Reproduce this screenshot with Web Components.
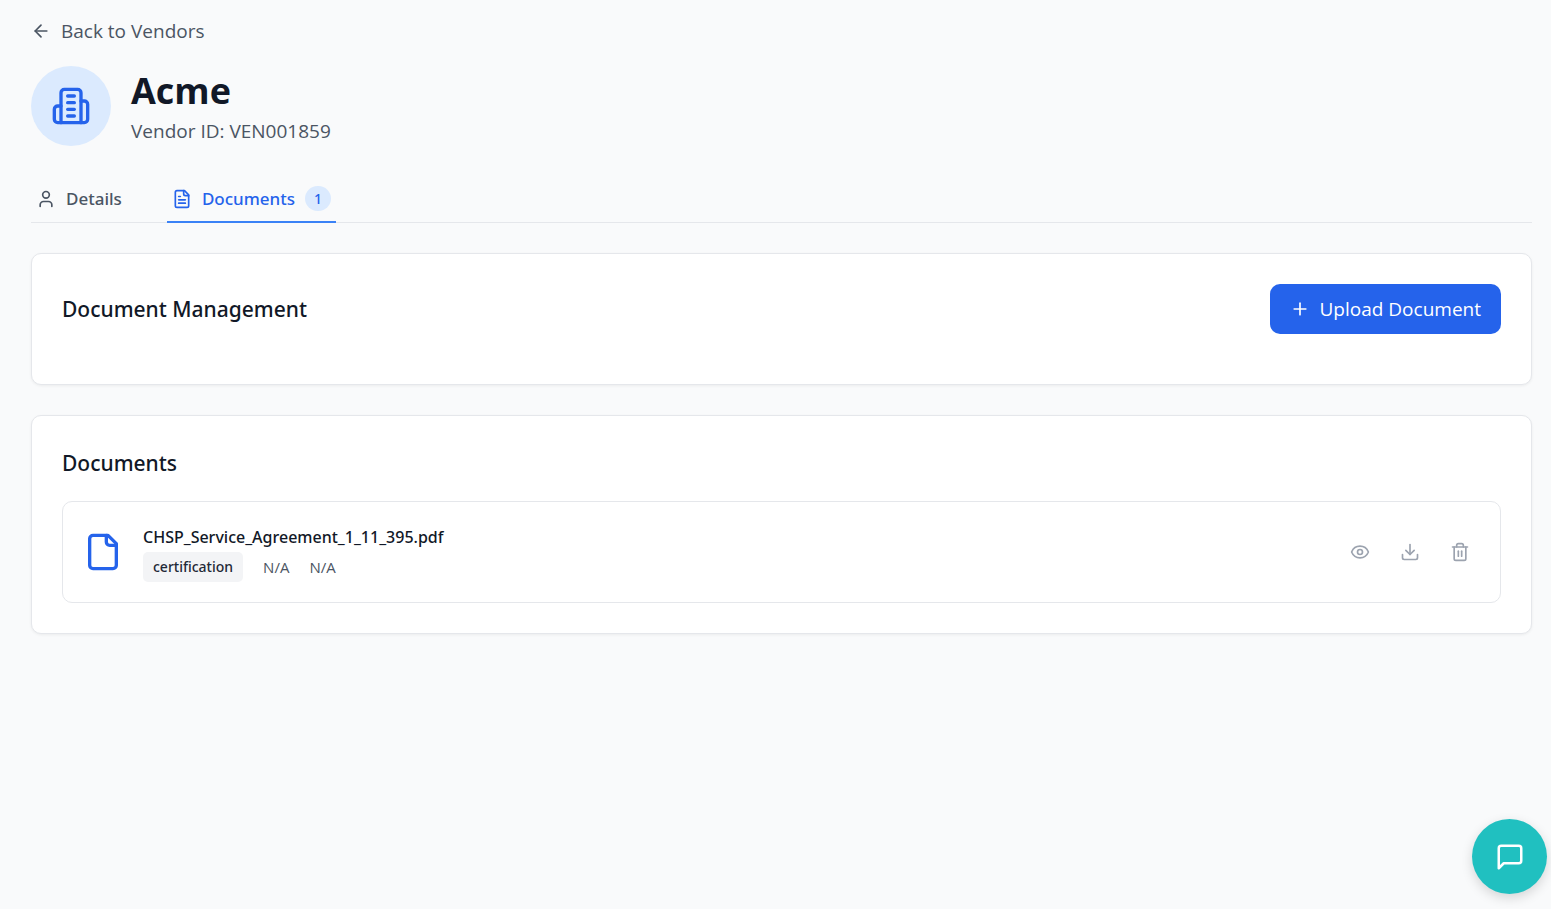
<!DOCTYPE html>
<html lang="en">
<head>
<meta charset="utf-8">
<meta name="viewport" content="width=device-width, initial-scale=1">
<title>Acme – Vendor documents</title>
<style>
  html { background: #f9fafb; }
  body {
    margin: 0;
    font-family: "Open Sans", "Noto Sans", sans-serif;
    font-size: 19px;
    line-height: 30px;
    color: #111827;
    --medium: "Noto Sans", "Open Sans", sans-serif;
    --blue: #2563eb;
    --blue-soft: #dbeafe;
    --line: #e5e7eb;
    --muted: #4b5563;
    --faint: #9ca3af;
  }
</style>
</head>
<body>
<vendor-page>
  <back-link slot="back" href="#vendors">Back to Vendors</back-link>
  <vendor-header slot="header" vendor-id="VEN001859">Acme</vendor-header>
  <tab-bar slot="tabs">
    <tab-item icon="user">Details</tab-item>
    <tab-item icon="file-text" count="1" active>Documents</tab-item>
  </tab-bar>
  <content-card heading="Document Management">
    <primary-button slot="action" icon="plus">Upload Document</primary-button>
  </content-card>
  <content-card heading="Documents">
    <document-row category="certification" issued="N/A" expires="N/A">CHSP_Service_Agreement_1_11_395.pdf</document-row>
  </content-card>
</vendor-page>
<chat-launcher></chat-launcher>

<script>
const ICONS = {
  'arrow-left': '<path d="m12 19-7-7 7-7"/><path d="M19 12H5"/>',
  'building': '<path d="M6 22V4a2 2 0 0 1 2-2h8a2 2 0 0 1 2 2v18Z"/><path d="M6 12H4a2 2 0 0 0-2 2v6a2 2 0 0 0 2 2h2"/><path d="M18 9h2a2 2 0 0 1 2 2v9a2 2 0 0 1-2 2h-2"/><path d="M10 6h4"/><path d="M10 10h4"/><path d="M10 14h4"/><path d="M10 18h4"/>',
  'user': '<path d="M19 21v-2a4 4 0 0 0-4-4H9a4 4 0 0 0-4 4v2"/><circle cx="12" cy="7" r="4"/>',
  'file': '<path d="M15 2H6a2 2 0 0 0-2 2v16a2 2 0 0 0 2 2h12a2 2 0 0 0 2-2V7Z"/><path d="M14 2v4a2 2 0 0 0 2 2h4"/>',
  'file-text': '<path d="M15 2H6a2 2 0 0 0-2 2v16a2 2 0 0 0 2 2h12a2 2 0 0 0 2-2V7Z"/><path d="M14 2v4a2 2 0 0 0 2 2h4"/><path d="M10 9H8"/><path d="M16 13H8"/><path d="M16 17H8"/>',
  'plus': '<path d="M5 12h14"/><path d="M12 5v14"/>',
  'eye': '<path d="M2.062 12.348a1 1 0 0 1 0-.696 10.75 10.75 0 0 1 19.876 0 1 1 0 0 1 0 .696 10.75 10.75 0 0 1-19.876 0"/><circle cx="12" cy="12" r="3"/>',
  'download': '<path d="M21 15v4a2 2 0 0 1-2 2H5a2 2 0 0 1-2-2v-4"/><path d="m7 10 5 5 5-5"/><path d="M12 15V3"/>',
  'trash': '<path d="M3 6h18"/><path d="M19 6v14a2 2 0 0 1-2 2H7a2 2 0 0 1-2-2V6"/><path d="M8 6V4a2 2 0 0 1 2-2h4a2 2 0 0 1 2 2v2"/><path d="M10 11v6"/><path d="M14 11v6"/>',
  'message': '<path d="M21 15a2 2 0 0 1-2 2H7l-4 4V5a2 2 0 0 1 2-2h14a2 2 0 0 1 2 2z"/>'
};

const RESET = `
  *, ::before, ::after { box-sizing: border-box; }
  button { font: inherit; color: inherit; background: none; border: 0; margin: 0; padding: 0; cursor: pointer; }
`;

class BaseElement extends HTMLElement {
  connectedCallback() {
    if (this.shadowRoot) return;
    this.attachShadow({ mode: 'open' }).innerHTML = `<style>${RESET}</style>${this.render()}`;
  }
  attr(name) { return this.getAttribute(name) || ''; }
}

customElements.define('ui-icon', class extends BaseElement {
  render() {
    return `<style>
      :host { display: block; flex: none; width: 20px; height: 20px; }
      :host([size="medium"]) { width: 30px; height: 30px; }
      :host([size="large"]) { width: 40px; height: 40px; }
      svg { display: block; width: 100%; height: 100%; }
    </style>
    <svg viewBox="0 0 24 24" fill="none" stroke="currentColor" stroke-width="2" stroke-linecap="round" stroke-linejoin="round" aria-hidden="true">${ICONS[this.attr('name')]}</svg>`;
  }
});

customElements.define('vendor-page', class extends BaseElement {
  render() {
    return `<style>
      :host { display: block; padding: 16px 19px 40px 31px; }
      main { display: flex; flex-direction: column; }
      .cards { display: grid; gap: 30px; margin-top: 30px; }
    </style>
    <main>
      <slot name="back"></slot>
      <slot name="header"></slot>
      <slot name="tabs"></slot>
      <div class="cards"><slot></slot></div>
    </main>`;
  }
});

customElements.define('back-link', class extends BaseElement {
  render() {
    return `<style>
      :host { display: flex; }
      a { display: flex; align-items: center; gap: 10px; color: var(--muted); text-decoration: none; }
    </style>
    <a href="${this.attr('href')}"><ui-icon name="arrow-left"></ui-icon><slot></slot></a>`;
  }
});

customElements.define('vendor-header', class extends BaseElement {
  render() {
    return `<style>
      :host { display: flex; align-items: center; gap: 20px; margin-top: 20px; }
      .avatar { display: grid; place-items: center; flex: none; width: 80px; height: 80px; border-radius: 50%; background: var(--blue-soft); color: var(--blue); }
      h1 { margin: 0; font-size: 36px; line-height: 50px; font-weight: 700; }
      p { margin: 0; color: var(--muted); }
    </style>
    <div class="avatar"><ui-icon name="building" size="large"></ui-icon></div>
    <div><h1><slot></slot></h1><p>Vendor ID: ${this.attr('vendor-id')}</p></div>`;
  }
});

customElements.define('tab-bar', class extends BaseElement {
  render() {
    return `<style>
      :host { display: block; margin-top: 30px; border-bottom: 1px solid var(--line); }
      nav { display: flex; gap: 40px; margin-bottom: -1px; }
    </style>
    <nav aria-label="Vendor sections"><slot></slot></nav>`;
  }
});

customElements.define('tab-item', class extends BaseElement {
  render() {
    const count = this.attr('count');
    const current = this.hasAttribute('active') ? ' aria-current="page"' : '';
    return `<style>
      :host { display: block; color: var(--muted); }
      :host([active]) { color: var(--blue); }
      button { display: flex; align-items: center; gap: 10px; height: 47px; padding: 0 5px; border-bottom: 2px solid transparent; font-family: var(--medium); font-size: 17px; font-weight: 500; }
      :host([active]) button { border-bottom-color: #3b82f6; }
      .count { min-width: 26px; height: 25px; border-radius: 13px; background: var(--blue-soft); font-size: 14px; line-height: 25px; text-align: center; }
    </style>
    <button type="button"${current}><ui-icon name="${this.attr('icon')}"></ui-icon><slot></slot>${count ? `<span class="count">${count}</span>` : ''}</button>`;
  }
});

customElements.define('content-card', class extends BaseElement {
  render() {
    return `<style>
      :host { display: block; }
      section { padding: 30px; border: 1px solid var(--line); border-radius: 10px; background: #fff; box-shadow: 0 1px 3px rgba(0, 0, 0, .06); }
      header { display: flex; align-items: center; justify-content: space-between; margin-bottom: 20px; }
      h2 { margin: 0; font-family: var(--medium); font-size: 21px; line-height: 35px; font-weight: 500; }
    </style>
    <section><header><h2>${this.attr('heading')}</h2><slot name="action"></slot></header><slot></slot></section>`;
  }
});

customElements.define('primary-button', class extends BaseElement {
  render() {
    return `<style>
      :host { display: block; }
      button { display: flex; align-items: center; gap: 10px; padding: 10px 20px; border-radius: 10px; background: var(--blue); color: #fff; }
    </style>
    <button type="button"><ui-icon name="${this.attr('icon')}"></ui-icon><slot></slot></button>`;
  }
});

customElements.define('icon-button', class extends BaseElement {
  render() {
    return `<style>
      :host { display: block; color: var(--faint); }
      button { display: block; padding: 10px; }
    </style>
    <button type="button" aria-label="${this.attr('label')}"><ui-icon name="${this.attr('icon')}"></ui-icon></button>`;
  }
});

customElements.define('document-row', class extends BaseElement {
  render() {
    return `<style>
      :host { display: flex; align-items: center; gap: 20px; padding: 20px; border: 1px solid var(--line); border-radius: 10px; }
      ui-icon { color: var(--blue); }
      .info { flex: 1; min-width: 0; }
      h3 { margin: 0; font-family: var(--medium); font-size: 16px; line-height: 30px; font-weight: 500; }
      .meta { display: flex; align-items: center; gap: 20px; font-size: 15px; color: var(--muted); }
      .tag { padding: 0 10px; border-radius: 5px; background: #f3f4f6; color: #1f2937; font-family: var(--medium); font-size: 14px; font-weight: 500; }
      .actions { display: flex; gap: 10px; }
    </style>
    <ui-icon name="file" size="large"></ui-icon>
    <div class="info">
      <h3><slot></slot></h3>
      <div class="meta"><span class="tag">${this.attr('category')}</span><span>${this.attr('issued')}</span><span>${this.attr('expires')}</span></div>
    </div>
    <div class="actions">
      <icon-button icon="eye" label="View"></icon-button>
      <icon-button icon="download" label="Download"></icon-button>
      <icon-button icon="trash" label="Delete"></icon-button>
    </div>`;
  }
});

customElements.define('chat-launcher', class extends BaseElement {
  render() {
    return `<style>
      :host { position: fixed; right: 4px; bottom: 15px; }
      button { display: grid; place-items: center; width: 75px; height: 75px; border-radius: 50%; background: #20c0c0; color: #fff; box-shadow: 0 4px 12px rgba(0, 0, 0, .15); }
    </style>
    <button type="button" aria-label="Open chat"><ui-icon name="message" size="medium"></ui-icon></button>`;
  }
});
</script>
</body>
</html>
